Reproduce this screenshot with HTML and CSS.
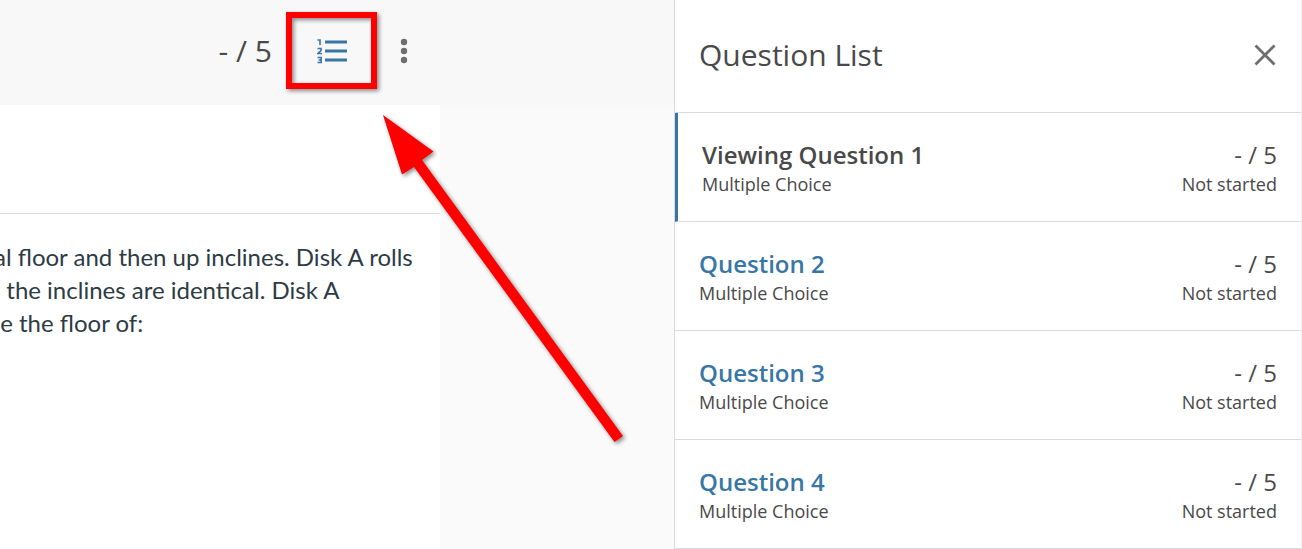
FILE: index.html
```html
<!DOCTYPE html>
<html lang="en">
<head>
<meta charset="utf-8">
<title>Question List</title>
<link rel="stylesheet" href="styles.css">
</head>
<body>
<div class="app">
  <main class="main">
    <header class="toolbar">
      <span class="toolbar-score">- / 5</span>
      <div class="callout">
        <button class="icon-button" type="button" aria-label="Question list">
          <svg width="30" height="26" viewBox="0 0 30 26" fill="none" stroke="#3876a6">
            <path d="M8 4H30M8 13H30M8 22H30" stroke-width="3"/>
            <path d="M0.500 2H3V7M0.500 10.500H4V12.500L1 15.500H5M0.500 19.500H4.200V24.500H0.500M1.500 22H4" stroke-width="1.600"/>
          </svg>
        </button>
        <svg class="callout-mark" width="360" height="450" viewBox="0 0 360 450" aria-hidden="true">
          <rect x="9" y="9" width="85" height="71" fill="none" stroke="#f00" stroke-width="6"/>
          <path d="M103 109L153.500 145.500L142 154L343 430L334.500 436L134 161L122 168.500Z" fill="#f00"/>
        </svg>
      </div>
      <button class="icon-button" type="button" aria-label="More options">
        <svg width="8" height="26" viewBox="0 0 8 26" fill="#6e6e6e">
          <circle cx="4" cy="4" r="3.200"/><circle cx="4" cy="13" r="3.200"/><circle cx="4" cy="22" r="3.200"/>
        </svg>
      </button>
    </header>
    <article class="sheet">
      <div class="sheet-head"></div>
      <p class="prompt">al floor and then up inclines. Disk A rolls
  the inclines are identical. Disk A
 e the floor of:</p>
    </article>
  </main>
  <aside class="panel">
    <header class="panel-head">
      <h2 class="panel-title">Question List</h2>
      <button class="icon-button" type="button" aria-label="Close">
        <svg width="24" height="24" viewBox="0 0 24 24" fill="none" stroke="#6e6e6e" stroke-width="2.800">
          <path d="M2.500 2.500L21.500 21.500M21.500 2.500L2.500 21.500"/>
        </svg>
      </button>
    </header>
    <ul class="questions">
      <li class="question question-current">
        <div><span class="question-name">Viewing Question 1</span><span class="detail">Multiple Choice</span></div>
        <div class="status"><span class="score">- / 5</span><span class="detail">Not started</span></div>
      </li>
      <li class="question">
        <div><a class="question-name" href="#q2">Question 2</a><span class="detail">Multiple Choice</span></div>
        <div class="status"><span class="score">- / 5</span><span class="detail">Not started</span></div>
      </li>
      <li class="question">
        <div><a class="question-name" href="#q3">Question 3</a><span class="detail">Multiple Choice</span></div>
        <div class="status"><span class="score">- / 5</span><span class="detail">Not started</span></div>
      </li>
      <li class="question">
        <div><a class="question-name" href="#q4">Question 4</a><span class="detail">Multiple Choice</span></div>
        <div class="status"><span class="score">- / 5</span><span class="detail">Not started</span></div>
      </li>
    </ul>
  </aside>
</div>
</body>
</html>
```
FILE: styles.css
```css
* { box-sizing: border-box; }
body {
  margin: 0;
  font-family: "Open Sans", "Noto Sans", sans-serif;
  color: #494949;
  background: #fafafa;
}
.app { display: flex; min-height: 100vh; }
.main { flex: 1; min-width: 0; display: flex; flex-direction: column; }
.toolbar {
  display: flex;
  align-items: center;
  justify-content: flex-end;
  height: 105px;
  padding: 0 250px 4px 0;
  background: #f8f8f8;
}
.toolbar-score { font-size: 30px; line-height: 40px; }
.icon-button {
  display: flex;
  align-items: center;
  justify-content: center;
  width: 40px;
  height: 40px;
  padding: 0;
  border: 0;
  background: none;
  cursor: pointer;
}
.callout { position: relative; margin: 0 32px 0 40px; }
.callout-mark {
  position: absolute;
  left: -32px;
  top: -25px;
  z-index: 1;
  pointer-events: none;
  filter: drop-shadow(2px 2px 2px rgba(0, 0, 0, 0.45));
}
.sheet {
  flex: 1;
  margin-right: 234px;
  background: #fff;
  overflow: hidden;
}
.sheet-head { height: 109px; border-bottom: 1px solid #d7dade; }
.prompt {
  margin: 26px 0 0 -6px;
  font: 24px/33px Lato, sans-serif;
  color: #2d3b45;
  white-space: pre;
}
.panel {
  flex: 0 0 628px;
  background: #fff;
  border: solid #d7dade;
  border-width: 0 1px;
  border-right-color: #eee;
}
.panel-head {
  display: flex;
  align-items: center;
  justify-content: space-between;
  height: 113px;
  padding: 0 16px 2px 24px;
  border-bottom: 1px solid #d9dbdd;
}
.panel-title { margin: 0; font-size: 30px; line-height: 40px; font-weight: 400; }
.questions { margin: 0; padding: 0; list-style: none; }
.question {
  display: flex;
  justify-content: space-between;
  height: 109px;
  padding: 26px 24px 0;
  border-bottom: 1px solid #d9dbdd;
}
.question-current { border-left: 3px solid #3876a6; }
.question-name, .score, .detail { display: block; }
.question-name {
  font-size: 24px;
  line-height: 32px;
  font-weight: 600;
  color: #3876a6;
  text-decoration: none;
}
.question-current .question-name { color: #494949; }
.status { text-align: right; }
.score { font-size: 24px; line-height: 32px; }
.detail { font-size: 18px; line-height: 26px; }
```
